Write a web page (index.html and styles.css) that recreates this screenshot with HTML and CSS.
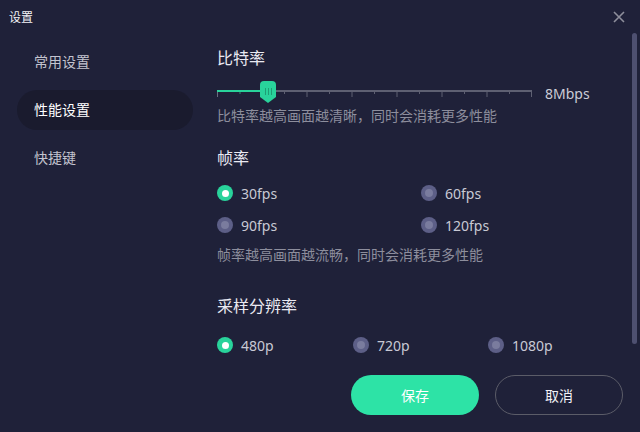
FILE: index.html
```html
<!DOCTYPE html>
<html lang="zh-CN">
<head>
    <meta charset="UTF-8">
    <title>设置</title>
    <link rel="stylesheet" href="styles.css">
</head>
<body>
    <div class="dialog">
        <!-- Title bar -->
        <div class="titlebar">
            <div class="title">设置</div>
            <svg class="close" width="12" height="12" viewBox="0 0 12 12">
                <path d="M1 1 L11 11 M11 1 L1 11" stroke="#8d8e9b" stroke-width="1.6" fill="none"/>
            </svg>
        </div>

        <div class="main">
            <!-- Side menu -->
            <div class="sidebar">
                <div class="nav-item">常用设置</div>
                <div class="nav-item active">性能设置</div>
                <div class="nav-item">快捷键</div>
            </div>

            <!-- Settings -->
            <div class="content">
                <div class="heading first">比特率</div>
                <div class="slider-row">
                    <svg class="slider" width="315" height="22" viewBox="0 0 315 22">
                        <rect x="0" y="9" width="315" height="2" fill="#5e6072"/>
                        <rect x="0" y="9" width="51" height="2" fill="#29d39b"/>
                        <g stroke="#5e6072" stroke-width="1">
                            <line x1="0.5" y1="11" x2="0.5" y2="16" stroke="#6c6e80"/>
                            <line x1="23" y1="11" x2="23" y2="13" stroke="#2f8f70"/>
                            <line x1="67.5" y1="11" x2="67.5" y2="13"/>
                            <line x1="90" y1="11" x2="90" y2="16"/>
                            <line x1="112.5" y1="11" x2="112.5" y2="13"/>
                            <line x1="135" y1="11" x2="135" y2="16"/>
                            <line x1="157.5" y1="11" x2="157.5" y2="13"/>
                            <line x1="180" y1="11" x2="180" y2="16"/>
                            <line x1="202.5" y1="11" x2="202.5" y2="13"/>
                            <line x1="225" y1="11" x2="225" y2="16"/>
                            <line x1="247.5" y1="11" x2="247.5" y2="13"/>
                            <line x1="270" y1="11" x2="270" y2="16"/>
                            <line x1="292.5" y1="11" x2="292.5" y2="13"/>
                            <line x1="314.5" y1="11" x2="314.5" y2="16"/>
                        </g>
                        <path d="M43 4 Q43 0 47 0 H55 Q59 0 59 4 V16 L51 22 L43 16 Z" fill="#29d39b"/>
                        <g stroke="#1e9e74" stroke-width="1">
                            <line x1="48.5" y1="7" x2="48.5" y2="14"/>
                            <line x1="51.5" y1="7" x2="51.5" y2="14"/>
                            <line x1="54.5" y1="7" x2="54.5" y2="14"/>
                        </g>
                    </svg>
                    <span class="slider-value">8Mbps</span>
                </div>
                <div class="hint">比特率越高画面越清晰，同时会消耗更多性能</div>

                <div class="heading">帧率</div>
                <div class="options fps">
                    <label class="option"><span class="radio checked"></span>30fps</label>
                    <label class="option"><span class="radio"></span>60fps</label>
                    <label class="option"><span class="radio"></span>90fps</label>
                    <label class="option"><span class="radio"></span>120fps</label>
                </div>
                <div class="hint">帧率越高画面越流畅，同时会消耗更多性能</div>

                <div class="heading res-heading">采样分辨率</div>
                <div class="options res">
                    <label class="option"><span class="radio checked"></span>480p</label>
                    <label class="option"><span class="radio"></span>720p</label>
                    <label class="option"><span class="radio"></span>1080p</label>
                </div>

                <div class="actions">
                    <button class="btn btn-primary">保存</button>
                    <button class="btn btn-ghost">取消</button>
                </div>
            </div>

            <!-- Scrollbar -->
            <div class="scrollbar">
                <div class="scroll-thumb"></div>
            </div>
        </div>
    </div>
</body>
</html>
```

FILE: styles.css
```css
/* Reset */
* {
    margin: 0;
    padding: 0;
    box-sizing: border-box;
}

body {
    font-family: 'Noto Sans', 'Noto Sans CJK SC', sans-serif;
    background: #1f2139;
    color: #e6e6ee;
    width: 640px;
    height: 432px;
    overflow: hidden;
}

.dialog {
    display: flex;
    flex-direction: column;
    height: 432px;
}

/* Title bar */
.titlebar {
    height: 33px;
    display: flex;
    align-items: center;
    justify-content: space-between;
    padding: 0 15px 0 9px;
}
.title {
    font-size: 12px;
    color: #f2f2f6;
}

.main {
    flex: 1;
    display: flex;
}

/* Side menu */
.sidebar {
    width: 200px;
    flex-shrink: 0;
    padding: 9px 0 0 17px;
    display: flex;
    flex-direction: column;
    gap: 8px;
}
.nav-item {
    width: 176px;
    height: 40px;
    line-height: 40px;
    padding-left: 17px;
    border-radius: 20px;
    font-size: 14px;
    color: #c3c4cf;
}
.nav-item.active {
    background: #1a1b2e;
    color: #ffffff;
}

/* Content */
.content {
    flex: 1;
    min-width: 0;
    padding: 0 9px 0 17px;
    display: flex;
    flex-direction: column;
}
.heading {
    font-size: 16px;
    line-height: 24px;
    color: #eaeaf2;
    margin-top: 20px;
}
.heading.first {
    margin-top: 13px;
}
.heading.res-heading {
    margin-top: 29px;
}

.slider-row {
    display: flex;
    align-items: center;
    gap: 13px;
    margin-top: 10px;
}
.slider {
    display: block;
}
.slider-value {
    font-size: 14px;
    color: #cbccd6;
    margin-top: 4px;
}

.hint {
    font-size: 14px;
    line-height: 20px;
    color: #8d8e9d;
    margin-top: 3px;
}
.options + .hint {
    margin-top: 10px;
}

.options {
    display: grid;
    row-gap: 12px;
    margin-top: 13px;
}
.options.fps {
    grid-template-columns: 204px auto;
}
.options.res {
    grid-template-columns: 136px 135px auto;
    margin-top: 17px;
}
.option {
    display: flex;
    align-items: center;
    gap: 8px;
    height: 20px;
    font-size: 14px;
    color: #c8c9d4;
}

/* Radio dots */
.radio {
    width: 16px;
    height: 16px;
    border-radius: 50%;
    background: #5d5f87;
    display: flex;
    align-items: center;
    justify-content: center;
}
.radio::after {
    content: "";
    width: 8px;
    height: 8px;
    border-radius: 50%;
    background: #7a7c9e;
}
.radio.checked {
    background: #29d39b;
}
.radio.checked::after {
    width: 7px;
    height: 7px;
    background: #ffffff;
}

/* Buttons */
.actions {
    display: flex;
    justify-content: flex-end;
    gap: 16px;
    margin-top: 20px;
}
.btn {
    width: 128px;
    height: 40px;
    border-radius: 20px;
    font-family: inherit;
    font-size: 14px;
    cursor: pointer;
}
.btn-primary {
    background: #2de3a6;
    border: none;
    color: #ffffff;
}
.btn-ghost {
    background: transparent;
    border: 1px solid #5b5c68;
    color: #f2f2f6;
}

/* Scrollbar */
.scrollbar {
    width: 5px;
    flex-shrink: 0;
    margin-right: 3px;
}
.scroll-thumb {
    height: 311px;
    border-radius: 3px;
    background: #4e5070;
}
```
